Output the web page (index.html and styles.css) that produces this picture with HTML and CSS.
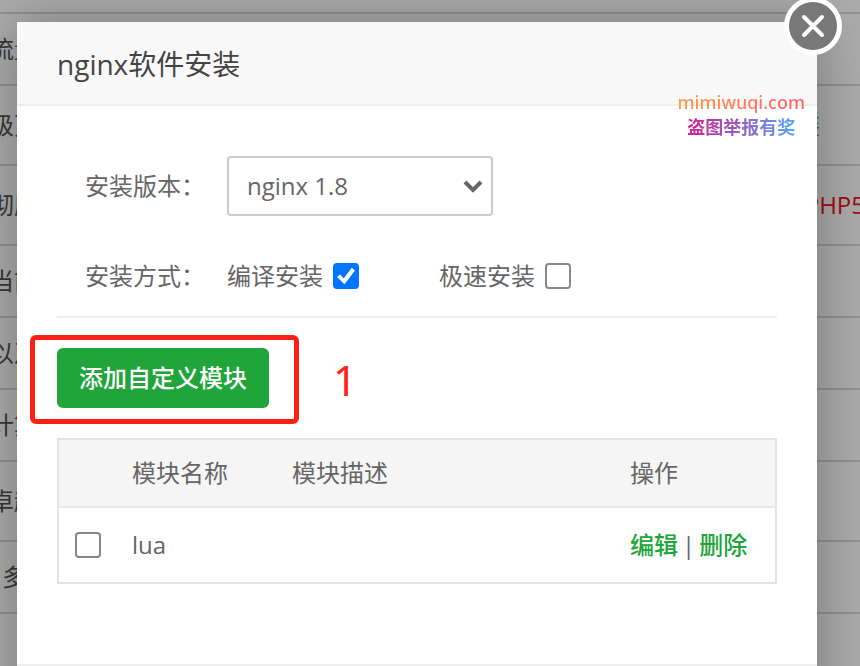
FILE: index.html
```html
<!DOCTYPE html>
<html lang="zh-CN">
<head>
    <meta charset="UTF-8">
    <title>nginx软件安装</title>
    <link rel="stylesheet" href="styles.css">
</head>
<body>
    <!-- 软件列表 -->
    <ul class="soft-list">
        <li class="short"></li>
        <li><span>流量</span></li>
        <li class="tall"><span>级更</span><a href="#" class="more">装</a></li>
        <li class="tall"><span>彻底</span><span class="warn">PHP5</span></li>
        <li><span>当前</span></li>
        <li><span>以及</span></li>
        <li><span>计算</span></li>
        <li class="tall"><span>卓越</span></li>
        <li><span class="indent">多</span></li>
        <li></li>
    </ul>
    <div class="shade"></div>

    <!-- 安装窗口 -->
    <div class="layer">
        <div class="dialog">
            <h1 class="dialog-title">nginx软件安装</h1>
            <button class="dialog-close" aria-label="关闭">
                <svg width="24" height="24" viewBox="0 0 24 24"><path d="M3 3L21 21M21 3L3 21" fill="none" stroke="#fff" stroke-width="4" stroke-linecap="round"/></svg>
            </button>
            <div class="dialog-body">
                <div class="line">
                    <label class="tname" for="version">安装版本：</label>
                    <div class="select-box">
                        <select id="version">
                            <option>nginx 1.8</option>
                        </select>
                        <svg width="20" height="14" viewBox="0 0 20 14"><path d="M2 3L10 11L18 3" fill="none" stroke="#666" stroke-width="4"/></svg>
                    </div>
                </div>
                <div class="line">
                    <span class="tname">安装方式：</span>
                    <label class="method">编译安装<input type="checkbox" checked></label>
                    <label class="method">极速安装<input type="checkbox"></label>
                </div>
                <div class="module-bar">
                    <div class="mark"><button class="btn">添加自定义模块</button></div>
                    <span class="step">1</span>
                </div>
                <table class="module-table">
                    <colgroup>
                        <col class="col-check">
                        <col class="col-name">
                        <col class="col-desc">
                        <col>
                    </colgroup>
                    <thead>
                        <tr>
                            <th></th>
                            <th>模块名称</th>
                            <th>模块描述</th>
                            <th>操作</th>
                        </tr>
                    </thead>
                    <tbody>
                        <tr>
                            <td><input type="checkbox" aria-label="lua"></td>
                            <td>lua</td>
                            <td></td>
                            <td><a href="#">编辑</a><span class="sep">|</span><a href="#">删除</a></td>
                        </tr>
                    </tbody>
                </table>
            </div>
            <div class="dialog-footer"></div>
            <div class="watermark">
                <span class="site">mimiwuqi.com</span>
                <span class="note">盗图举报有奖</span>
            </div>
        </div>
    </div>
</body>
</html>
```

FILE: styles.css
```css
* {
    box-sizing: border-box;
}
body {
    margin: 0;
    height: 100vh;
    overflow: hidden;
    position: relative;
    background: #fff;
    color: #666;
    font-family: "Open Sans", "Noto Sans CJK SC", sans-serif;
    font-size: 24px;
    line-height: 32px;
}
a {
    color: #20a53a;
    text-decoration: none;
}

/* 软件列表 */
.soft-list {
    height: 100%;
    overflow: hidden;
    margin: 0;
    padding: 0;
    list-style: none;
    color: #555;
}
.soft-list li {
    display: flex;
    align-items: center;
    justify-content: space-between;
    height: 72px;
    margin: 0 -20px 0 -10px;
    border-bottom: 2px solid #d8d8d8;
}
.soft-list .short {
    height: 14px;
}
.soft-list .tall {
    height: 80px;
}
.soft-list .indent {
    padding-left: 12px;
}
.soft-list .warn {
    color: #f01020;
    padding-right: 15px;
}
.soft-list .more {
    color: #2aa7d0;
    padding-right: 60px;
}
.shade {
    position: absolute;
    inset: 0;
    background: rgba(0, 0, 0, 0.33);
}

/* 窗口 */
.layer {
    position: absolute;
    inset: 0;
    overflow: hidden;
    padding: 22px 43px 0 17px;
}
.dialog {
    position: relative;
    background: #fff;
    box-shadow: 1px 1px 50px rgba(0, 0, 0, 0.3);
}
.dialog-title {
    margin: 0;
    padding: 0 40px;
    height: 84px;
    line-height: 84px;
    font-size: 28px;
    font-weight: normal;
    color: #444;
    background: #f8f8f8;
    border-bottom: 2px solid #eee;
}
.dialog-close {
    position: absolute;
    top: -25px;
    right: -25px;
    width: 58px;
    height: 58px;
    padding: 0;
    display: flex;
    align-items: center;
    justify-content: center;
    border: 5px solid #fff;
    border-radius: 50%;
    background: #787878;
    cursor: pointer;
}
.dialog-body {
    padding: 50px 40px 80px;
}
.dialog-footer {
    height: 100px;
    background: #f8f8f8;
    border-top: 2px solid #eee;
}

/* 表单 */
.line {
    display: flex;
    align-items: center;
    height: 60px;
    padding-left: 28px;
    margin-bottom: 30px;
}
.tname {
    width: 142px;
}
.select-box {
    position: relative;
}
select {
    appearance: none;
    width: 266px;
    height: 60px;
    padding: 0 18px;
    border: 2px solid #ccc;
    border-radius: 4px;
    background: #fff;
    color: #666;
    font: inherit;
}
.select-box svg {
    position: absolute;
    right: 10px;
    top: 23px;
    pointer-events: none;
}
.method {
    display: flex;
    align-items: center;
    gap: 10px;
    margin-right: 80px;
}
input[type="checkbox"] {
    appearance: none;
    display: block;
    width: 26px;
    height: 26px;
    margin: 0;
    border: 2px solid #888;
    border-radius: 4px;
    background: #fff;
}
input[type="checkbox"]:checked {
    border-color: #0075ff;
    background: #0075ff;
}
input[type="checkbox"]:checked::after {
    content: "";
    display: block;
    width: 22px;
    height: 22px;
    background: #fff;
    clip-path: polygon(9% 55%, 23% 43%, 40% 61%, 76% 13%, 91% 25%, 43% 87%);
}

/* 自定义模块 */
.module-bar {
    display: flex;
    align-items: center;
    margin: -20px 0 14px;
    padding-top: 17px;
    border-top: 2px solid #eee;
}
.mark {
    margin-left: -27px;
    padding: 8px 25px 11px 22px;
    border: 5px solid #ff2015;
    border-radius: 6px;
}
.btn {
    display: block;
    height: 60px;
    padding: 0 22px;
    border: none;
    border-radius: 6px;
    background: #20a53a;
    color: #fff;
    font: inherit;
    font-weight: 500;
    cursor: pointer;
}
.step {
    margin-left: 34px;
    color: #ff2015;
    font-family: "Noto Sans", sans-serif;
    font-size: 42px;
}
.module-table {
    width: 100%;
    table-layout: fixed;
    border-collapse: collapse;
    border: 2px solid #e2e2e2;
}
.module-table th,
.module-table td {
    padding: 0 16px;
    text-align: left;
    font-weight: normal;
}
.module-table th {
    height: 68px;
    background: #f5f5f5;
    border-bottom: 2px solid #e8e8e8;
}
.module-table td {
    height: 76px;
}
.module-table a {
    font-weight: 500;
}
.sep {
    margin: 0 4px;
}
.col-check {
    width: 58px;
}
.col-name {
    width: 160px;
}
.col-desc {
    width: 338px;
}

/* 水印 */
.watermark {
    position: absolute;
    top: 68px;
    right: 12px;
    display: flex;
    flex-direction: column;
    align-items: center;
    font-size: 18px;
    line-height: 25px;
}
.watermark span {
    color: transparent;
    background-clip: text;
    -webkit-background-clip: text;
}
.watermark .site {
    font-family: "Noto Sans", sans-serif;
    font-weight: 500;
    background-image: linear-gradient(90deg, #ff9a44, #ff5e70);
}
.watermark .note {
    font-weight: bold;
    background-image: linear-gradient(90deg, #d02090, #55a5f5);
}
```
